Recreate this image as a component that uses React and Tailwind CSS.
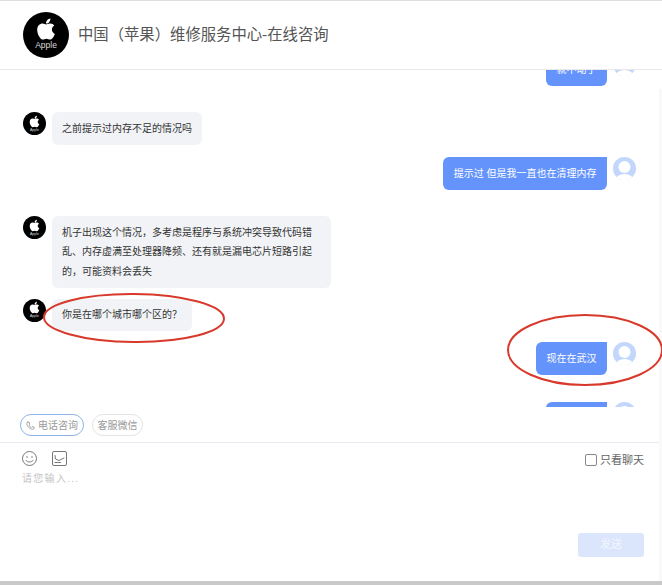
import React from "react";
import { FaApple } from "react-icons/fa";

const FONT = { fontFamily: '"Liberation Sans", "Noto Sans CJK SC", sans-serif' };

function BotAvatar() {
  return (
    <div className="w-[23px] h-[23px] rounded-full bg-black shrink-0 flex flex-col items-center justify-center overflow-hidden">
      <FaApple className="text-white text-[13px] -mt-[1px]" />
      <span className="text-[#ddd] text-[3.5px] leading-[4px]">Apple</span>
    </div>
  );
}

function UserAvatar() {
  return (
    <svg width="23" height="23" viewBox="0 0 23 23" className="shrink-0">
      <defs>
        <clipPath id="uc"><circle cx="11.5" cy="11.5" r="11.5" /></clipPath>
      </defs>
      <g clipPath="url(#uc)">
        <rect width="23" height="23" fill="#c3d6fb" />
        <circle cx="11.5" cy="10" r="6" fill="#fff" />
        <ellipse cx="11.5" cy="23" rx="9" ry="6" fill="#fff" />
      </g>
    </svg>
  );
}

function Bot({ className, children, w }) {
  return (
    <div className={"flex items-start pl-[23px] gap-[6px] " + className}>
      <BotAvatar />
      <div className={"bg-[#f2f3f7] text-[#333] rounded-[6px] px-[10px] py-[6.5px] text-[10px] leading-[19.5px] " + (w || "")}>
        {children}
      </div>
    </div>
  );
}

function User({ className, children }) {
  return (
    <div className={"flex items-start justify-end pr-[26px] gap-[6px] " + className}>
      <div className="bg-[#6494fb] text-white rounded-[6px] rounded-tr-none px-[10.5px] py-[6.5px] text-[10px] leading-[19.5px] min-h-[32.5px] min-w-[61px] text-center">
        {children}
      </div>
      <UserAvatar />
    </div>
  );
}

export default function App() {
  return (
    <div style={FONT} className="relative w-[662px] h-[585px] bg-white overflow-hidden flex flex-col border-t border-[#dedede]">
      <header className="h-[69px] shrink-0 flex items-center pl-[23px] gap-[9px] border-b border-[#e8e8e8]">
        <div className="w-[46px] h-[46px] rounded-full bg-black flex flex-col items-center justify-center shrink-0">
          <FaApple className="text-white text-[24px] -mt-[3px]" />
          <span className="text-[#ddd] text-[8.5px] leading-[9px]">Apple</span>
        </div>
        <h1 className="text-[15.35px] text-[#555] font-normal">中国（苹果）维修服务中心-在线咨询</h1>
      </header>

      <main className="h-[337px] shrink-0 overflow-hidden">
        <User className="-mt-[17px]">就不动了</User>
        <Bot className="mt-[26.5px]">之前提示过内存不足的情况吗</Bot>
        <User className="mt-[12.5px]">提示过 但是我一直也在清理内存</User>
        <Bot className="mt-[26.5px]" w="w-[279px]">机子出现这个情况，多考虑是程序与系统冲突导致代码错乱、内存虚满至处理器降频、还有就是漏电芯片短路引起的，可能资料会丢失</Bot>
        <Bot className="mt-[11px]">你是在哪个城市哪个区的？</Bot>
        <User className="mt-[11px]">现在在武汉</User>
        <User className="mt-[27.5px]" />
      </main>

      <div className="h-[36px] shrink-0 flex items-start pl-[20px] gap-[8px] pt-[7px] border-b border-[#e8ebf2]">
        <button className="h-[22px] px-[5px] rounded-full border border-[#8db4e8] text-[#999] text-[10px] flex items-center gap-[3px]">
          <svg width="9" height="9" viewBox="0 0 24 24" fill="none" stroke="#999" strokeWidth="2.4" strokeLinecap="round">
            <path d="M5 3l4 1 1 5-2 2c1 3 3 5 6 6l2-2 5 1 1 4c-1 1-2 2-4 2C10 22 2 14 2 6c0-1 2-3 3-3z" />
          </svg>
          电话咨询
        </button>
        <button className="h-[22px] px-[4.5px] rounded-full border border-[#e4e4e4] text-[#999] text-[10px]">客服微信</button>
      </div>

      <div className="flex-1 relative pl-[22px] pr-[18px]">
        <div className="flex items-start justify-between pt-[8px]">
          <div className="flex gap-[15px]">
            <svg width="15" height="15" viewBox="0 0 15 15" fill="none" stroke="#777" strokeWidth="1">
              <circle cx="7.5" cy="7.5" r="7" />
              <circle cx="5" cy="6" r="0.8" fill="#777" stroke="none" />
              <circle cx="10" cy="6" r="0.8" fill="#777" stroke="none" />
              <path d="M4 9.5c1 2 6 2 7 0" strokeLinecap="round" />
            </svg>
            <svg width="15" height="15" viewBox="0 0 15 15" fill="none" stroke="#777" strokeWidth="1">
              <rect x="0.5" y="0.5" width="14" height="14" rx="1.5" />
              <path d="M3 4.5 3.5 8 7 9.5 12 7M3 11.5h5.5" strokeLinecap="round" />
            </svg>
          </div>
          <label className="flex items-center gap-[3px] text-[11px] text-[#666] mt-[1px]">
            <span className="w-[12px] h-[12px] rounded-[2px] border border-[#888] bg-white" />
            只看聊天
          </label>
        </div>
        <div className="mt-[3px] text-[10px] leading-[14px] tracking-[1.3px] text-[#c4c4c4]">请您输入...</div>
        <button className="block ml-auto mt-[47px] w-[66px] h-[24px] rounded-[3px] bg-[#dbe6fd] text-[#f3f6fe] text-[11px]">发送</button>
      </div>

      <div className="h-[4px] shrink-0 bg-[#c9c9c9]" />

      <div className="absolute right-0 top-[88px] bottom-[4px] w-[3px] bg-[#f9f9f9]" />

      <svg className="absolute inset-0 pointer-events-none" width="662" height="585" fill="none" stroke="#d8392b" strokeWidth="2">
        <ellipse cx="134" cy="317" rx="90" ry="24" transform="rotate(0.5 134 317)" />
        <ellipse cx="585" cy="349" rx="77" ry="35" />
      </svg>
    </div>
  );
}
